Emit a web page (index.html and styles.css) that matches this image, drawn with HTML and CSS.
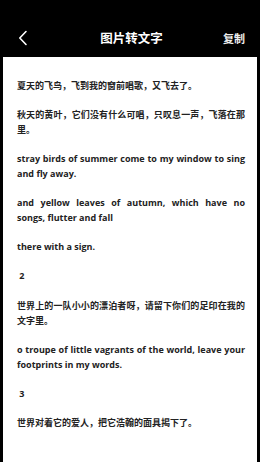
FILE: index.html
```html
<!DOCTYPE html>
<html lang="zh">
<head>
<meta charset="utf-8">
<link rel="stylesheet" href="styles.css">
</head>
<body>
<div class="screen">
  <header class="topbar">
    <div class="back">
      <svg width="10" height="16" viewBox="0 0 10 16"><path d="M8 1.5 L1.8 8 L8 14.5" fill="none" stroke="#fff" stroke-width="1.6" stroke-linecap="round" stroke-linejoin="round"/></svg>
    </div>
    <div class="title">图片转文字</div>
    <div class="action">复制</div>
  </header>
  <main class="card">
    <p>夏天的飞鸟，飞到我的窗前唱歌，又飞去了。</p>
    <p>秋天的黄叶，它们没有什么可唱，只叹息一声，飞落在那里。</p>
    <p>stray birds of summer come to my window to sing and fly away.</p>
    <p>and yellow leaves of autumn, which have no songs, flutter and fall</p>
    <p>there with a sign.</p>
    <p>&nbsp;2</p>
    <p>世界上的一队小小的漂泊者呀，请留下你们的足印在我的文字里。</p>
    <p>o troupe of little vagrants of the world, leave your footprints in my words.</p>
    <p>&nbsp;3</p>
    <p>世界对着它的爱人，把它浩翰的面具揭下了。</p>
  </main>
</div>
</body>
</html>
```

FILE: styles.css
```css
html, body {
  margin: 0;
  padding: 0;
  background: #000;
  height: 100%;
  overflow: hidden;
}
.screen {
  display: flex;
  flex-direction: column;
  height: 462px;
  font-family: "Noto Sans CJK SC", "Noto Sans", sans-serif;
}
.topbar {
  height: 39px;
  padding-top: 18px;
  display: flex;
  align-items: center;
  justify-content: space-between;
  color: #fff;
  flex-shrink: 0;
}
.back {
  width: 40px;
  padding-left: 18px;
  display: flex;
  align-items: center;
}
.back svg { display: block; }
.title {
  font-size: 12.5px;
  font-weight: 700;
}
.action {
  width: 40px;
  text-align: right;
  padding-right: 15px;
  font-size: 11px;
  font-weight: 700;
  color: #eee;
}
.card {
  flex: 1;
  background: #fff;
  margin: 0 3px;
  padding: 20.5px 12px 0 14px;
}
.card p {
  margin: 0 0 14.2px;
  font-family: "Open Sans", "Noto Sans CJK SC", sans-serif;
  font-size: 9px;
  line-height: 15px;
  font-weight: 700;
  color: #222;
  text-align: justify;
}
```
